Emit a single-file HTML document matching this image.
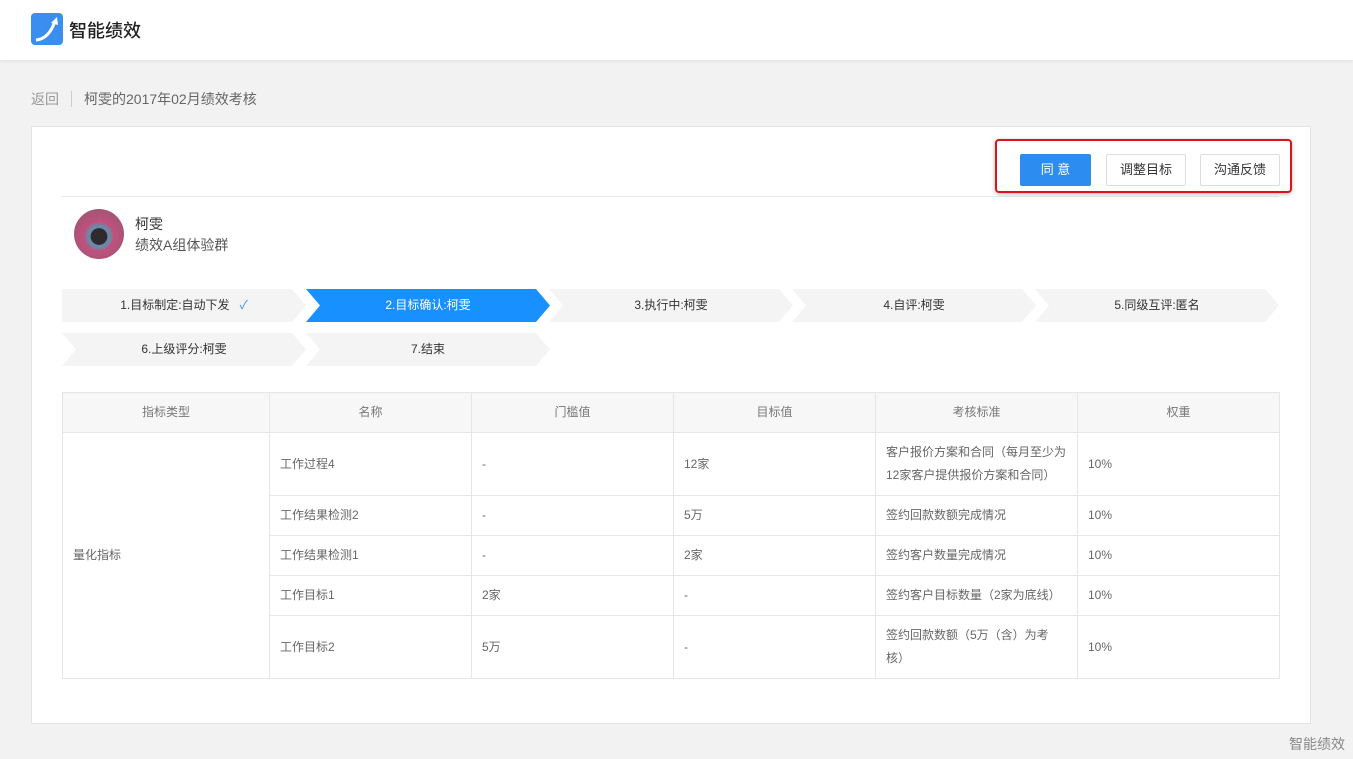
<!DOCTYPE html>
<html><head><meta charset="utf-8"><style>
*{margin:0;padding:0;box-sizing:border-box}
body{width:1353px;height:759px;background:#f2f2f2;font-family:"Liberation Sans","Noto Sans CJK SC",sans-serif;position:relative;overflow:hidden;color:#333}
.hdr{position:absolute;left:0;top:0;width:1353px;height:60px;background:#fff;box-shadow:0 1px 4px rgba(0,0,0,.08)}
.logo{position:absolute;left:31px;top:13px;width:32px;height:32px;background:#3a8ef0;border-radius:4px}
.title{position:absolute;left:69px;top:17px;font-size:18px;color:#222;font-weight:500}
.bc{position:absolute;left:31px;top:89px;font-size:14px;color:#666}
.bc span{color:#999}
.bc i{display:inline-block;width:1px;height:16px;background:#ccc;margin:0 12px;vertical-align:-3px}
.card{position:absolute;left:31px;top:126px;width:1280px;height:598px;background:#fff;border:1px solid #e3e3e3}
.line{position:absolute;left:62px;top:196px;width:1217px;height:1px;background:#e8e8e8}
.btn{position:absolute;top:154px;height:32px;font-size:13px;line-height:30px;text-align:center;border:1px solid #ddd;border-radius:2px;background:#fff;color:#333}
.redbox{position:absolute;left:995px;top:139px;width:297px;height:54px;border:2px solid #d9141b;border-radius:4px;box-shadow:0 1px 4px rgba(0,0,0,.3)}
.av{position:absolute;left:74px;top:209px;width:50px;height:50px;border-radius:50%;background:radial-gradient(circle at 50% 55%,#2e2a2e 0 22%,#6a8aa8 23% 30%,#c0507e 40%,#8a5a6c 100%)}
.nm{position:absolute;left:135px;top:214px;font-size:14px;color:#333}
.grp{position:absolute;left:135px;top:235px;font-size:14px;color:#555}
.st{position:absolute;height:33px;width:244px;background:#f4f4f4;font-size:12px;line-height:33px;text-align:center;color:#333;clip-path:polygon(0 0,230px 0,244px 50%,230px 100%,0 100%,14px 50%)}
.st.f{clip-path:polygon(0 0,230px 0,244px 50%,230px 100%,0 100%)}
.st.a{background:#1890ff;color:#fff}
table{position:absolute;left:62px;top:392px;width:1218px;border-collapse:collapse;font-size:12px;color:#666;table-layout:fixed}
td,th{border:1px solid #e6e6e6;padding:0 10px;text-align:left;font-weight:normal;line-height:23px}
td.c{padding-right:0;white-space:nowrap;overflow:hidden}
th{background:#f7f7f7;text-align:center;height:40px;color:#777}
.ft{position:absolute;right:8px;top:734px;font-size:14px;color:#888}
</style></head><body>
<div class="hdr"><div class="logo"><svg width="32" height="32"><path d="M5 27 Q18 26 24 8" stroke="#fff" stroke-width="3" fill="none"/><path d="M20 10 L26 4 L27 12Z" fill="#fff"/></svg></div><div class="title">智能绩效</div></div>
<div class="bc"><span>返回</span><i></i>柯雯的2017年02月绩效考核</div>
<div class="card"></div>
<div class="line"></div>
<div class="btn" style="left:1020px;width:71px;background:#2d8cf0;border-color:#2d8cf0;color:#fff">同 意</div>
<div class="btn" style="left:1106px;width:80px">调整目标</div>
<div class="btn" style="left:1200px;width:80px">沟通反馈</div>
<div class="redbox"></div>
<div class="av"></div>
<div class="nm">柯雯</div><div class="grp">绩效A组体验群</div>
<div class="st f" style="left:62px;top:289px">1.目标制定:自动下发 &nbsp;&nbsp;<span style="color:#3a8ef0">✓</span></div>
<div class="st a" style="left:306px;top:289px">2.目标确认:柯雯</div>
<div class="st" style="left:549px;top:289px">3.执行中:柯雯</div>
<div class="st" style="left:792px;top:289px">4.自评:柯雯</div>
<div class="st" style="left:1035px;top:289px">5.同级互评:匿名</div>
<div class="st" style="left:62px;top:333px">6.上级评分:柯雯</div>
<div class="st" style="left:306px;top:333px">7.结束</div>
<table>
<tr><th style="width:207px">指标类型</th><th style="width:202px">名称</th><th style="width:202px">门槛值</th><th style="width:202px">目标值</th><th style="width:202px">考核标准</th><th>权重</th></tr>
<tr style="height:63px"><td rowspan="5">量化指标</td><td>工作过程4</td><td>-</td><td>12家</td><td class="c">客户报价方案和合同（每月至少为<br>12家客户提供报价方案和合同）</td><td>10%</td></tr>
<tr style="height:40px"><td>工作结果检测2</td><td>-</td><td>5万</td><td class="c">签约回款数额完成情况</td><td>10%</td></tr>
<tr style="height:40px"><td>工作结果检测1</td><td>-</td><td>2家</td><td class="c">签约客户数量完成情况</td><td>10%</td></tr>
<tr style="height:40px"><td>工作目标1</td><td>2家</td><td>-</td><td class="c">签约客户目标数量（2家为底线）</td><td>10%</td></tr>
<tr style="height:63px"><td>工作目标2</td><td>5万</td><td>-</td><td class="c">签约回款数额（5万（含）为考<br>核）</td><td>10%</td></tr>
</table>
<div class="ft">智能绩效</div>
</body></html>
